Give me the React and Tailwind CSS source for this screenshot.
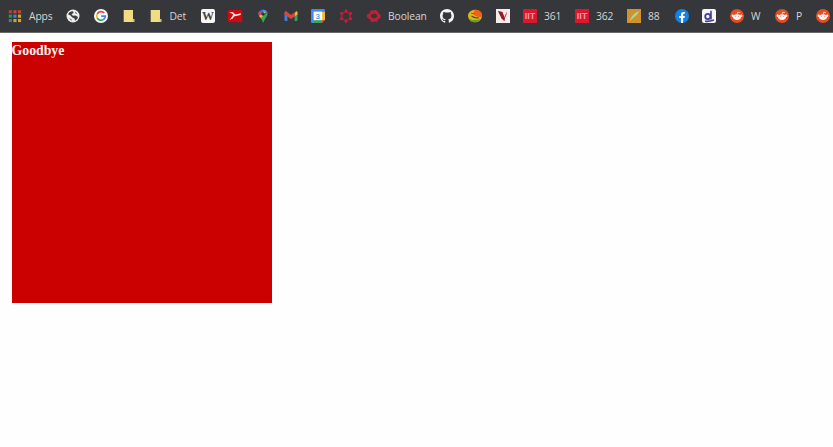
import React from "react";

const svg = "block h-[14px] w-[14px] shrink-0 overflow-visible";

const AppsIcon = () => (
  <svg viewBox="0 0 14 14" className={svg}>
    {["#c43d34", "#c9443a", "#c5482c", "#36915b", "#4285d4", "#d8a02c", "#36915b", "#c9a43a", "#d8a02c"].map((c, i) => (
      <rect key={i} x={0.8 + (i % 3) * 4.6} y={1.2 + Math.floor(i / 3) * 4.4} width="3.1" height="3.1" fill={c} />
    ))}
  </svg>
);

const Globe = () => (
  <svg viewBox="0 0 14 14" className={svg}>
    <circle cx="7" cy="7" r="6.5" fill="#eeeeee" />
    <path d="M2 5.2 C3 3 5 2 7 2.2 L7.5 4 L5.5 5.2 L7 6.7 L9.5 6.5 L12 8 C11.7 9.7 10.5 11 9 11.8 L8.5 9.6 L6.3 8.6 L4.5 6.6Z" fill="#3b3d40" />
    <path d="M3 9 L5.5 10.2 L5.7 12Z M9 2.5 L11.5 4.8 L9.5 4.5Z" fill="#55575a" />
  </svg>
);

const Google = () => (
  <svg viewBox="0 0 14 14" className={svg}>
    <circle cx="7" cy="7" r="7" fill="#fafafa" />
    <g fill="none" strokeWidth="1.7">
      <path d="M10.2 4 A4.3 4.3 0 0 0 3.3 4.9" stroke="#e5483c" />
      <path d="M3.3 4.9 A4.3 4.3 0 0 0 3.3 9.1" stroke="#f2b51d" />
      <path d="M3.3 9.1 A4.3 4.3 0 0 0 9.7 10.3" stroke="#35a455" />
      <path d="M9.7 10.3 A4.3 4.3 0 0 0 11.3 7.1 H7.2" stroke="#4384ee" />
    </g>
  </svg>
);

const Folder = () => (
  <svg viewBox="0 0 14 14" className={svg}>
    <path d="M1.7 1 H11 V10 H12.3 V13 H1.7Z" fill="#f0dc82" />
    <path d="M10.8 10 H12.3 V13 H10.8Z" fill="#d9bd60" />
  </svg>
);

const Wikipedia = () => (
  <svg viewBox="0 0 14 14" className={svg}>
    <rect width="14" height="14" rx="2" fill="#f7f7f7" />
    <text x="7" y="11.2" textAnchor="middle" fontFamily="Liberation Serif, serif" fontWeight="700" fontSize="12" textLength="12" lengthAdjust="spacingAndGlyphs" fill="#444">W</text>
  </svg>
);

const RedBadge = () => (
  <svg viewBox="0 0 14 14" className={svg}>
    <rect x="-.3" y="1" width="14.6" height="12.2" rx="1.5" fill="#cf0710" />
    <path d="M1 3.2 L5 3.2 L7.5 5.4 L13 4.3 L12.4 5.9 L8 7 L6 7.6 L4.8 9.5 L1.5 11 L4 7.8 L5.2 5.5 L3.7 4.6Z" fill="#ffe9e8" />
  </svg>
);

const MapPin = () => (
  <svg viewBox="0 0 14 14" className={svg}>
    <path d="M7 0.5 A4.8 4.8 0 0 0 2.3 6 L7 5Z" fill="#2f6fd8" />
    <path d="M7 .5 A4.8 4.8 0 0 1 11.3 3.3 L7 5.3Z" fill="#4d9af2" />
    <path d="M3.2 2.3 L7 5.3 L4 8 C2 6 2 4 3.2 2.3Z" fill="#dc4a35" />
    <path d="M3 7 L9.5 2.5 L7.5 7 L5.3 9.7Z" fill="#f1b928" />
    <path d="M11.3 3.1 C12.7 6.5 9.2 8.6 7.7 13.2 H6.7 C6.5 11.5 5.8 10.4 4.8 9.2Z" fill="#35a957" />
    <circle cx="7" cy="5.1" r="1.7" fill="#29313a" />
  </svg>
);

const Gmail = () => (
  <svg viewBox="0 0 14 14" className={svg}>
    <path d="M.5 4 H3.4 V12 H1.5 Q.5 12 .5 11Z" fill="#3d7fe2" />
    <path d="M10.6 4 H13.5 V11 Q13.5 12 12.5 12 H10.6Z" fill="#32a456" />
    <path d="M10.6 4.2 L12 2.3 Q13.5 2 13.5 3.5 V5.5 L10.6 7.5Z" fill="#edb927" />
    <path d="M.5 5.5 V3.5 Q.7 1.7 2.3 2.3 L7 6 L10.6 3.2 V7.4 L7 10 L3.4 7.4Z" fill="#df4438" />
  </svg>
);

const Calendar = () => (
  <svg viewBox="0 0 14 14" className={svg}>
    <path d="M1 0 H13 Q14 0 14 1 V10 L10 14 H1 Q0 14 0 13 V1 Q0 0 1 0Z" fill="#428aef" />
    <path d="M11 3 H14 V11 H11Z" fill="#eebd2f" />
    <path d="M3 11 H11 V14 H3Z" fill="#35a557" />
    <path d="M11 11 H14 L11 14Z" fill="#e44e3d" />
    <rect x="2.6" y="2.6" width="8.6" height="8.6" fill="#f7faff" />
    <text x="7" y="9.7" textAnchor="middle" fontFamily="Roboto, sans-serif" fontWeight="500" fontSize="7.5" fill="#4a8fe0">3</text>
  </svg>
);

const Gear = () => (
  <svg viewBox="0 0 14 14" className={svg}>
    <circle cx="7" cy="7.2" r="4.2" fill="none" stroke="#a92036" strokeWidth="1.7" />
    {[0, 60, 120, 180, 240, 300].map((a) => (
      <circle key={a} cx="7" cy="1.9" r="1.45" fill="#c5213a" transform={`rotate(${a} 7 7.2)`} />
    ))}
  </svg>
);

const RedRing = () => (
  <svg viewBox="0 0 14 14" className={svg}>
    <path fillRule="evenodd" d="M4 .9 L6 1.8 L8 .7 L10.5 1.7 L11.3 4 L13.8 6 V8.7 L11.4 10.2 L10 13 L7.2 12.5 L4.5 13.2 L2.7 10.3 L0 8.6 V5.5 L2.7 4.2Z M7 4.4 L4.6 5.5 L3.8 7.3 L5.2 9 L8.4 9.3 L10.3 7.4 L9.2 4.9Z" fill="#be2036" />
  </svg>
);

const Github = () => (
  <svg viewBox="0 0 16 16" className={svg}>
    <path fill="#f4f4f4" d="M8 0C3.58 0 0 3.58 0 8c0 3.54 2.29 6.53 5.47 7.59.4.07.55-.17.55-.38v-1.49c-2.01.37-2.53-.49-2.69-.94-.09-.23-.48-.94-.82-1.13-.28-.15-.68-.52-.01-.53.63-.01 1.08.58 1.23.82.72 1.21 1.87.87 2.33.66.07-.52.28-.87.51-1.07-1.78-.2-3.64-.89-3.64-3.95 0-.87.31-1.59.82-2.15-.08-.2-.36-1.02.08-2.12 0 0 .67-.21 2.2.82A7.7 7.7 0 0 1 8 3.86c.68 0 1.36.09 2 .27 1.53-1.04 2.2-.82 2.2-.82.44 1.1.16 1.92.08 2.12.51.56.82 1.27.82 2.15 0 3.07-1.87 3.75-3.65 3.95.29.25.54.73.54 1.48v2.2c0 .21.15.46.55.38A8.01 8.01 0 0 0 16 8c0-4.42-3.58-8-8-8Z" />
  </svg>
);

const Fruit = () => (
  <svg viewBox="0 0 14 14" className={svg}>
    <ellipse cx="7" cy="7" rx="7" ry="6.3" fill="#d9b81a" />
    <path d="M.4 9 C3 11.5 7 11.6 13 10 C10 14.6 2 14.3 .4 9Z" fill="#6c9c22" />
    <path d="M6.5 .7 C12.5 0 15 4.5 13.8 7.8 C10.5 8.6 7.5 7.5 5.5 5.6Z" fill="#f2601c" />
    <path d="M3.5 7 Q6.5 9.4 11 8.7" fill="none" stroke="#6b4512" strokeWidth="1.1" />
    <path d="M3.3 4.3 L6.5 4.5" stroke="#8a5a16" />
  </svg>
);

const Cardinal = () => (
  <svg viewBox="0 0 14 14" className={svg}>
    <rect width="14" height="14" fill="#f6ecea" />
    <path d="M2 2 L6.5 3 L8.5 8 L10.8 2.3 L10.6 5.5 L9 9 L8.6 12.2 L5.6 9.5Z" fill="#c93a48" />
    <path d="M2.3 2.2 L6 3.1 L8.3 8.5 L8.3 11.8 L5.6 9.2Z" fill="#8f1c2a" />
  </svg>
);

const Iit = () => (
  <svg viewBox="0 0 14 14" className={svg}>
    <rect width="14" height="14" fill="#dc1730" />
    <text x="7" y="10.3" textAnchor="middle" fontFamily="Liberation Sans, sans-serif" fontWeight="700" fontSize="9.5" textLength="10.5" lengthAdjust="spacingAndGlyphs" fill="#f79aa2">IIT</text>
  </svg>
);

const Feather = () => (
  <svg viewBox="0 0 14 14" className={svg}>
    <rect width="14" height="14" fill="#d0922a" />
    <path d="M1.8 12.5 L5 7.5 Q7 3.5 12.5 2 Q10.5 6 7.5 8Z" fill="#b5cf95" />
  </svg>
);

const Facebook = () => (
  <svg viewBox="0 0 14 14" className={svg}>
    <circle cx="7" cy="7" r="7" fill="#1682e8" />
    <path d="M6 14 V9 H4.2 V7 H6 V5.5 C6 3.5 7.2 2.6 9.8 3 V4.8 C8.5 4.7 8.1 5 8.1 6 V7 H9.9 L9.5 9 H8.1 V14Z" fill="#fff" />
  </svg>
);

const DIcon = () => (
  <svg viewBox="0 0 14 14" className={svg}>
    <rect width="14" height="14" rx="2" fill="#f6f6fc" />
    <circle cx="5.8" cy="7.5" r="2.6" fill="none" stroke="#41419a" strokeWidth="1.8" />
    <path d="M9 1.8 V10.5 M3 12.3 Q8 12.6 12 11" fill="none" stroke="#41419a" strokeWidth="1.6" />
  </svg>
);

const Reddit = () => (
  <svg viewBox="0 0 14 14" className={svg}>
    <circle cx="7" cy="7" r="7" fill="#e94a20" />
    <ellipse cx="7" cy="8.1" rx="4" ry="2.8" fill="#fff3ed" />
    <circle cx="2.8" cy="6.8" r="1.2" fill="#fff3ed" />
    <circle cx="11.2" cy="6.8" r="1.2" fill="#fff3ed" />
    <path d="M7 5.5 L7.7 3.2 L9.8 3.6" fill="none" stroke="#ffe1d4" strokeWidth=".9" />
    <circle cx="5.5" cy="7.5" r=".6" fill="#f19b7b" />
    <circle cx="8.5" cy="7.5" r=".6" fill="#f19b7b" />
  </svg>
);

const bookmarks = [
  [AppsIcon, "w-[57.5px]", "Apps"],
  [Globe, "w-[28px]"],
  [Google, "w-[28px]"],
  [Folder, "w-[27px]"],
  [Folder, "w-[52px]", "Det"],
  [Wikipedia, "w-[27.5px]"],
  [RedBadge, "w-[28px]"],
  [MapPin, "w-[27.5px]"],
  [Gmail, "w-[27.5px]"],
  [Calendar, "w-[28px]"],
  [Gear, "w-[28px]"],
  [RedRing, "w-[73px]", "Boolean"],
  [Github, "w-[28px]"],
  [Fruit, "w-[27.5px]"],
  [Cardinal, "w-[27.5px]"],
  [Iit, "w-[52px]", "361"],
  [Iit, "w-[52px]", "362"],
  [Feather, "w-[47.5px]", "88"],
  [Facebook, "w-[27.5px]"],
  [DIcon, "w-[28px]"],
  [Reddit, "w-[45px]", "W"],
  [Reddit, "w-[40.5px]", "P"],
  [Reddit, "w-[28px]"],
];

export default function App() {
  return (
    <div className="h-[447px] w-[833px] overflow-hidden bg-[#fefefe]">
      <nav className="flex h-[33px] items-center overflow-hidden border-b border-[#67696b] bg-[#35373a] pl-2 font-['Open_Sans',sans-serif] text-[10.3px] leading-[14px] text-[#d6d6d6]">
        {bookmarks.map(([Icon, width, label], i) => (
          <div key={i} className={`flex shrink-0 items-center gap-[7px] ${width}`}>
            <Icon />
            {label && <span className="whitespace-nowrap tracking-[-0.1px]">{label}</span>}
          </div>
        ))}
      </nav>
      <main className="pt-[9px] pl-[11.5px]">
        <div className="h-[260.5px] w-[260.5px] bg-[#cb0000] font-['Liberation_Serif',serif] text-[13.8px] leading-[18px] font-bold text-[#fff0ed]">
          Goodbye
        </div>
      </main>
    </div>
  );
}
